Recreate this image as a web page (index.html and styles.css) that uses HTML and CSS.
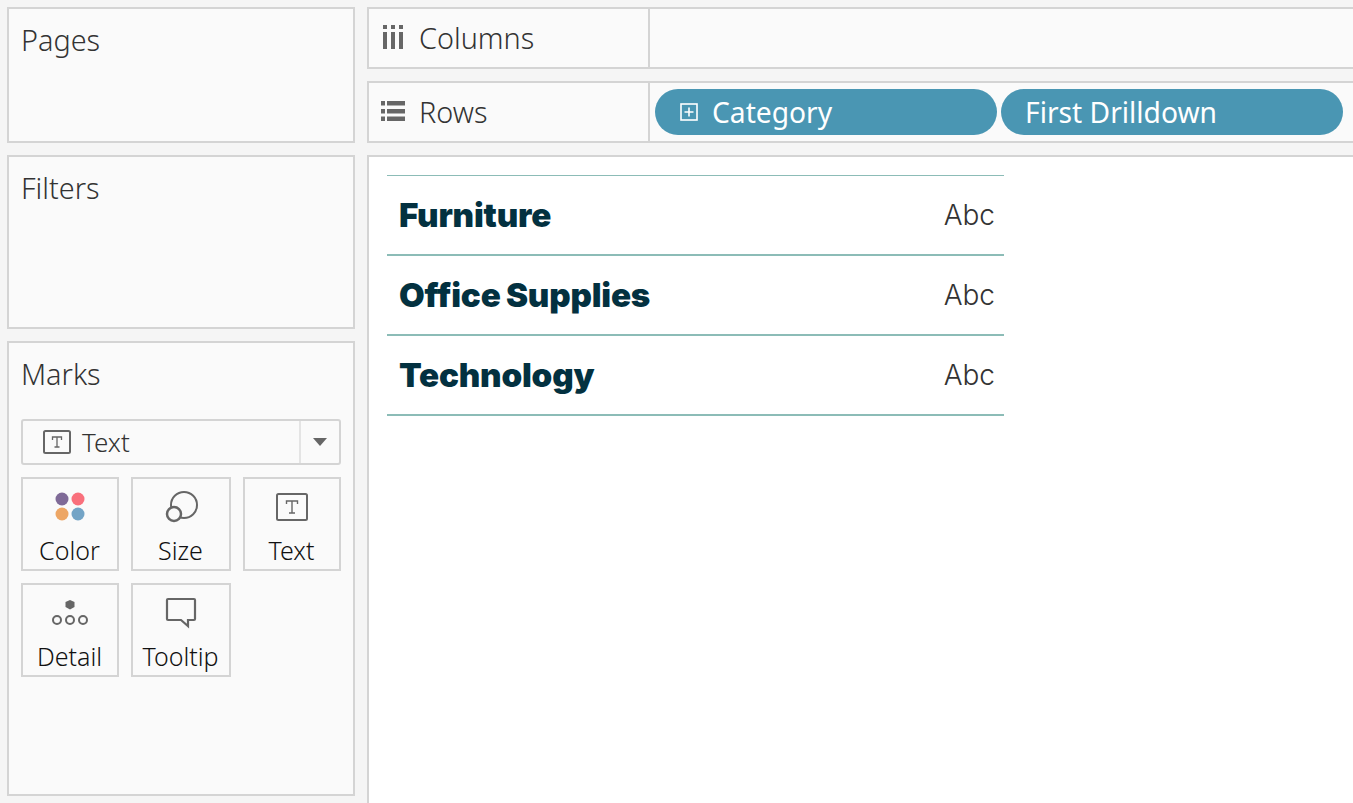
FILE: index.html
```html
<!DOCTYPE html>
<html>
<head>
    <meta charset="UTF-8">
    <title>Category drilldown</title>
    <link rel="stylesheet" href="styles.css">
</head>
<body>
<div class="workspace">
    <aside class="sidebar">
        <section class="card card-pages"><h2>Pages</h2></section>
        <section class="card card-filters"><h2>Filters</h2></section>
        <section class="card card-marks">
            <h2>Marks</h2>
            <div class="mark-select">
                <div class="mark-type">
                    <svg width="28" height="24" viewBox="0 0 28 24"><rect x="1" y="1" width="26" height="22" rx="1.5" fill="none" stroke="#666" stroke-width="2"/><path d="M9.500 10V7h9v3M14 7v10M11.500 17h5" fill="none" stroke="#666" stroke-width="1.300"/></svg>
                    <span>Text</span>
                </div>
                <div class="mark-arrow"><i></i></div>
            </div>
            <div class="mark-grid">
                <div class="mark-btn">
                    <svg width="30" height="30" viewBox="0 0 30 30"><circle cx="7" cy="7" r="6.500" fill="#7f6a97"/><circle cx="23" cy="7" r="6.500" fill="#f9707c"/><circle cx="7" cy="22" r="6.500" fill="#eda665"/><circle cx="23" cy="22" r="6.500" fill="#73a4c6"/></svg>
                    <span>Color</span>
                </div>
                <div class="mark-btn">
                    <svg width="34" height="32" viewBox="0 0 34 32"><circle cx="20" cy="14" r="13" fill="none" stroke="#666" stroke-width="2"/><circle cx="10" cy="23" r="7" fill="#fafafa" stroke="#666" stroke-width="2.500"/></svg>
                    <span>Size</span>
                </div>
                <div class="mark-btn">
                    <svg width="32" height="28" viewBox="0 0 32 28"><rect x="1" y="1" width="30" height="26" rx="1.500" fill="none" stroke="#666" stroke-width="2"/><path d="M10.500 11V8h11v3M16 8v12M13 20h6" fill="none" stroke="#666" stroke-width="1.400"/></svg>
                    <span>Text</span>
                </div>
                <div class="mark-btn">
                    <svg width="36" height="32" viewBox="0 0 36 32"><path d="M18 3l4.500 2v5L18 12.500 13.500 10V5z" fill="#666"/><circle cx="5" cy="23" r="4" fill="none" stroke="#666" stroke-width="2"/><circle cx="18" cy="23" r="4" fill="none" stroke="#666" stroke-width="2"/><circle cx="31" cy="23" r="4" fill="none" stroke="#666" stroke-width="2"/></svg>
                    <span>Detail</span>
                </div>
                <div class="mark-btn">
                    <svg width="32" height="32" viewBox="0 0 32 32"><path d="M3 2h26a1 1 0 0 1 1 1v19a1 1 0 0 1-1 1h-6v6l-7-6H3a1 1 0 0 1-1-1V3a1 1 0 0 1 1-1z" fill="none" stroke="#666" stroke-width="2.200"/></svg>
                    <span>Tooltip</span>
                </div>
            </div>
        </section>
    </aside>
    <main class="content">
        <div class="shelf shelf-columns">
            <div class="shelf-label">
                <svg width="26" height="24" viewBox="0 0 26 24"><path d="M3 0h4v4H3zM11 0h4v4h-4zM19 0h4v4h-4zM3 7h4v17H3zM11 7h4v17h-4zM19 7h4v17h-4z" fill="#666"/></svg>
                <span>Columns</span>
            </div>
            <div class="shelf-pills"></div>
        </div>
        <div class="shelf shelf-rows">
            <div class="shelf-label">
                <svg width="26" height="20" viewBox="0 0 26 20"><path d="M1 0h4v4.500H1zM7 0h18v4.500H7zM1 8h4v4.500H1zM7 8h18v4.500H7zM1 15.500h4V20H1zM7 15.500h18V20H7z" fill="#666"/></svg>
                <span>Rows</span>
            </div>
            <div class="shelf-pills">
                <div class="pill pill-category">
                    <svg width="18" height="18" viewBox="0 0 18 18"><rect x="1" y="1" width="16" height="16" fill="none" stroke="#fff" stroke-width="1.600"/><path d="M9 4.500v9M4.500 9h9" stroke="#fff" stroke-width="1.600"/></svg>
                    <span>Category</span>
                </div>
                <div class="pill pill-drill"><span>First Drilldown</span></div>
            </div>
        </div>
        <div class="view">
            <div class="text-table">
                <div class="table-row"><b>Furniture</b><span>Abc</span></div>
                <div class="table-row"><b>Office Supplies</b><span>Abc</span></div>
                <div class="table-row"><b>Technology</b><span>Abc</span></div>
            </div>
        </div>
    </main>
</div>
</body>
</html>
```

FILE: styles.css
```css
* {
    margin: 0;
    padding: 0;
    box-sizing: border-box;
}

html, body {
    height: 100%;
    overflow: hidden;
    background: #f5f5f5;
}

body {
    font-family: "Noto Sans", "Open Sans", sans-serif;
    color: #333;
}

.workspace {
    display: flex;
    gap: 12px;
    height: 803px;
    padding: 7px 0 0 7px;
}

.sidebar {
    display: flex;
    flex-direction: column;
    gap: 12px;
    flex: 0 0 348px;
    padding-bottom: 7px;
}

.card {
    padding: 15px 12px;
    background: #fafafa;
    border: 2px solid #d4d4d4;
}

.card h2 {
    font-size: 28.800px;
    font-weight: 300;
    line-height: 32px;
    color: #333;
}

.card-pages {
    height: 136px;
}

.card-filters {
    height: 174px;
}

.card-marks {
    flex: 1;
}

.mark-select {
    display: flex;
    height: 46px;
    margin-top: 29px;
    background: #fafafa;
    border: 2px solid #d4d4d4;
    border-radius: 3px;
}

.mark-type {
    display: flex;
    align-items: center;
    gap: 11px;
    flex: 1;
    padding-left: 20px;
    font-size: 26px;
    font-weight: 300;
    color: #333;
    border-right: 2px solid #e4e4e4;
}

.mark-arrow {
    display: flex;
    align-items: center;
    justify-content: center;
    width: 38px;
}

.mark-arrow i {
    border-top: 8px solid #666;
    border-left: 7px solid transparent;
    border-right: 7px solid transparent;
}

.mark-grid {
    display: grid;
    grid-template-columns: 98px 100px 98px;
    gap: 12px;
    margin-top: 12px;
}

.mark-btn {
    display: flex;
    flex-direction: column;
    align-items: center;
    height: 94px;
    padding: 12px 1px 0 0;
    border: 2px solid #d4d4d4;
    font-size: 25px;
    font-weight: 300;
    color: #111;
}

.mark-btn svg {
    height: 32px;
}

.mark-btn span {
    margin-top: 11px;
    line-height: 32px;
}

.content {
    display: flex;
    flex-direction: column;
    flex: 1;
    min-width: 0;
    gap: 12px;
}

.shelf {
    display: flex;
    height: 62px;
    background: #fafafa;
    border: 2px solid #d4d4d4;
    border-right: 0;
}

.shelf-label {
    display: flex;
    align-items: center;
    gap: 13px;
    width: 281px;
    padding: 0 0 2px 11px;
    border-right: 2px solid #d4d4d4;
    font-size: 28.800px;
    font-weight: 300;
    color: #333;
}

.shelf-label svg {
    flex: none;
}

.shelf-pills {
    display: flex;
    align-items: center;
    gap: 4px;
    flex: 1;
    padding-left: 5px;
}

.pill {
    display: flex;
    align-items: center;
    height: 46px;
    border-radius: 23px;
    background: #4a96b3;
    font-size: 28.200px;
    color: #fff;
}

.pill-category {
    gap: 14px;
    width: 342px;
    padding-left: 25px;
}

.pill-drill {
    width: 342px;
    padding-left: 24px;
}

.view {
    flex: 1;
    padding: 18px 0 0 18px;
    background: #fff;
    border: 2px solid #d4d4d4;
    border-right: 0;
    border-bottom: 0;
}

.text-table {
    width: 617px;
    border-top: 1px solid #8cbcb7;
}

.table-row {
    display: flex;
    align-items: center;
    justify-content: space-between;
    height: 80px;
    padding: 0 9px 0 12px;
    border-bottom: 2px solid #8cbcb7;
}

.table-row b {
    font-family: "Inter", sans-serif;
    font-size: 33.200px;
    font-weight: 900;
    letter-spacing: -0.2px;
    word-spacing: -1px;
    color: #033140;
}

.table-row span {
    font-family: "Inter", sans-serif;
    font-size: 28px;
    font-weight: 300;
    color: #333;
}
```
